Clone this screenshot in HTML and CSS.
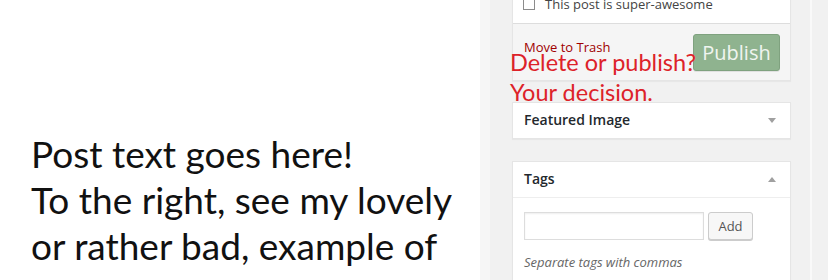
FILE: index.html
```html
<!DOCTYPE html>
<html>
<head>
<meta charset="utf-8">
<link rel="stylesheet" href="styles.css">
</head>
<body>
<div class="page">
  <main class="editor">
    <p class="post">Post text goes here!<br>To the right, see my lovely<br>or rather bad, example of</p>
  </main>
  <aside class="sidebar">
    <div class="box publish">
      <div class="misc">
        <label class="check"><span class="cb"></span>This post is super-awesome</label>
      </div>
      <div class="actions">
        <a class="trash">Move to Trash</a>
        <button class="publish-btn">Publish</button>
      </div>
      <div class="note">Delete or publish?<br>Your decision.</div>
    </div>
    <div class="box">
      <h2 class="box-title">Featured Image <span class="arrow down"></span></h2>
    </div>
    <div class="box">
      <h2 class="box-title head-line">Tags <span class="arrow up"></span></h2>
      <div class="inside">
        <div class="tag-row">
          <input class="tag-input" type="text">
          <button class="add-btn">Add</button>
        </div>
        <p class="howto">Separate tags with commas</p>
      </div>
    </div>
  </aside>
  <div class="scroll"></div>
</div>
</body>
</html>
```
FILE: styles.css
```css
html, body {
  margin: 0;
  padding: 0;
  background: #ffffff;
}
.page {
  display: flex;
  height: 280px;
  overflow: hidden;
}
.editor {
  width: 480px;
  flex: none;
  background: #ffffff;
}
.post {
  margin: 0;
  padding: 131px 0 0 31px;
  font-family: Lato, "Open Sans", sans-serif;
  font-size: 37px;
  line-height: 46px;
  color: #111111;
  white-space: nowrap;
}
.sidebar {
  width: 330px;
  flex: none;
  box-sizing: border-box;
  background: #f1f1f1;
  border-left: 10px solid #f6f6f6;
  padding-left: 22px;
  font-family: "Open Sans", sans-serif;
  font-size: 13px;
  color: #444444;
}
.scroll {
  flex: 1;
  background: #f1f1f1;
  border-left: 2px solid #f9f9f9;
}
.box {
  width: 279px;
  box-sizing: border-box;
  background: #ffffff;
  border: 1px solid #e5e5e5;
  box-shadow: 0 1px 1px rgba(0, 0, 0, 0.04);
  margin-bottom: 22px;
}
.publish {
  position: relative;
  margin-top: -20px;
  margin-bottom: 21px;
}
.misc {
  padding: 14px 10px 10px 10px;
  border-bottom: 1px solid #dddddd;
}
.check {
  display: flex;
  align-items: center;
  gap: 10px;
  line-height: 18px;
  color: #444444;
}
.cb {
  width: 12px;
  height: 12px;
  box-sizing: border-box;
  border: 1px solid #8c8c8c;
  background: #ffffff;
}
.actions {
  display: flex;
  justify-content: space-between;
  align-items: flex-start;
  background: #f5f5f5;
  padding: 10px 10px 9px 11px;
}
.trash {
  margin-top: 4px;
  line-height: 18px;
  color: #a00000;
}
.publish-btn {
  width: 87px;
  height: 37px;
  padding: 0;
  border: 1px solid #7fa27f;
  border-radius: 3px;
  background: #8fb38f;
  box-shadow: 0 1px 0 rgba(0, 0, 0, 0.08);
  font-family: "Open Sans", sans-serif;
  font-size: 20px;
  color: #f0f5f0;
  line-height: 1;
}
.note {
  position: absolute;
  left: -3px;
  top: 66px;
  font-family: Lato, "Open Sans", sans-serif;
  font-size: 23.5px;
  line-height: 30px;
  color: #dd2229;
  white-space: nowrap;
}
.box-title {
  margin: 0;
  display: flex;
  justify-content: space-between;
  align-items: center;
  padding: 7px 14px 8px 11px;
  font-size: 14px;
  font-weight: 600;
  line-height: 20px;
  color: #23282d;
}
.head-line {
  border-bottom: 1px solid #eeeeee;
}
.arrow {
  width: 0;
  height: 0;
  border-left: 4px solid transparent;
  border-right: 4px solid transparent;
}
.arrow.down {
  border-top: 5px solid #a0a0a0;
}
.arrow.up {
  border-bottom: 5px solid #a0a0a0;
}
.inside {
  padding: 14px 11px 12px 11px;
}
.tag-row {
  display: flex;
  gap: 4px;
}
.tag-input {
  width: 180px;
  height: 28px;
  box-sizing: border-box;
  margin: 0;
  border: 1px solid #dddddd;
  box-shadow: inset 0 1px 2px rgba(0, 0, 0, 0.07);
  background: #ffffff;
}
.add-btn {
  width: 45px;
  height: 28px;
  box-sizing: border-box;
  padding: 0;
  border: 1px solid #cccccc;
  border-radius: 3px;
  background: #f7f7f7;
  box-shadow: 0 1px 0 #cccccc;
  font-family: "Open Sans", sans-serif;
  font-size: 13px;
  color: #555555;
}
.howto {
  margin: 13px 0 0 0;
  font-style: italic;
  line-height: 18px;
  color: #666666;
}
```
